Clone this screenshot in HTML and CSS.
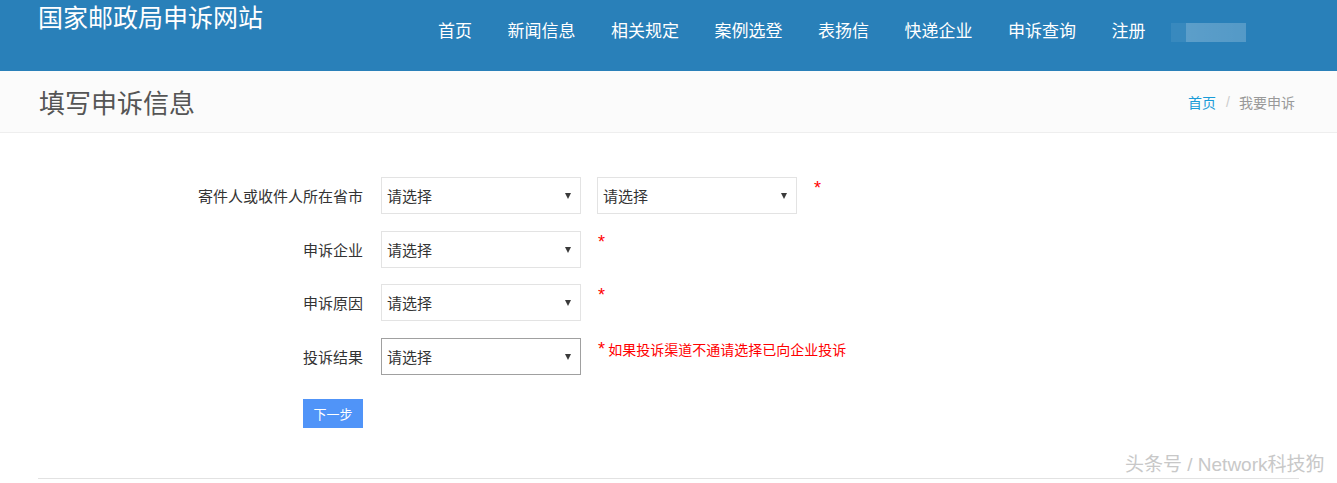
FILE: index.html
```html
<!DOCTYPE html>
<html lang="zh-CN">
<head>
<meta charset="utf-8">
<title>国家邮政局申诉网站</title>
<link rel="stylesheet" href="styles.css">
</head>
<body>
<header class="site-header">
  <h1 class="site-title">国家邮政局申诉网站</h1>
  <nav class="main-nav">
    <a href="#">首页</a>
    <a href="#">新闻信息</a>
    <a href="#">相关规定</a>
    <a href="#">案例选登</a>
    <a href="#">表扬信</a>
    <a href="#">快递企业</a>
    <a href="#">申诉查询</a>
    <a href="#">注册</a>
    <span class="blurred"></span>
  </nav>
</header>

<section class="page-band">
  <div class="band-inner">
    <h2 class="page-title">填写申诉信息</h2>
    <ol class="breadcrumb">
      <li><a href="#">首页</a></li>
      <li class="sep">/</li>
      <li class="current">我要申诉</li>
    </ol>
  </div>
</section>

<main class="content">
  <form class="complaint-form">
    <div class="form-row">
      <label class="form-label">寄件人或收件人所在省市</label>
      <div class="select-wrap"><select><option>请选择</option></select></div>
      <div class="select-wrap second"><select><option>请选择</option></select></div>
      <span class="req"><span class="star">*</span></span>
    </div>
    <div class="form-row">
      <label class="form-label">申诉企业</label>
      <div class="select-wrap"><select><option>请选择</option></select></div>
      <span class="req"><span class="star">*</span></span>
    </div>
    <div class="form-row">
      <label class="form-label">申诉原因</label>
      <div class="select-wrap"><select><option>请选择</option></select></div>
      <span class="req"><span class="star">*</span></span>
    </div>
    <div class="form-row">
      <label class="form-label">投诉结果</label>
      <div class="select-wrap focused"><select><option>请选择</option></select></div>
      <span class="req"><span class="star">*</span> 如果投诉渠道不通请选择已向企业投诉</span>
    </div>
    <div class="form-actions">
      <button type="button" class="btn-next">下一步</button>
    </div>
  </form>
  <hr class="footer-line">
</main>

<div class="watermark">头条号 / Network科技狗</div>
</body>
</html>
```

FILE: styles.css
```css
* { box-sizing: border-box; }

html, body {
  margin: 0;
  padding: 0;
}

body {
  font-family: "Liberation Sans", "Noto Sans CJK SC", sans-serif;
  color: #333;
  background: #fff;
  position: relative;
  height: 483px;
  overflow: hidden;
}

/* ---------- header ---------- */
.site-header {
  background: #2980b9;
  height: 71px;
  display: flex;
  align-items: flex-start;
  padding: 0 38px;
}

.site-title {
  margin: 0;
  padding-top: 3.5px;
  font-family: "Noto Sans CJK SC", sans-serif;
  font-weight: normal;
  font-size: 25px;
  line-height: 25px;
  color: #fff;
  white-space: nowrap;
}

.main-nav {
  display: flex;
  align-items: center;
  gap: 35.5px;
  margin-left: 175px;
  margin-top: 18px;
}

.main-nav a {
  font-family: "Noto Sans CJK SC", sans-serif;
  font-size: 17px;
  line-height: 20px;
  color: #fff;
  text-decoration: none;
  white-space: nowrap;
}

.main-nav .blurred {
  display: block;
  width: 75px;
  height: 19px;
  margin-left: -10.5px;
  margin-top: 5px;
  background: linear-gradient(to right,
    rgba(255,255,255,0.07) 0, rgba(255,255,255,0.07) 15px,
    rgba(255,255,255,0.24) 15px, rgba(255,255,255,0.20) 100%);
}

/* ---------- page band ---------- */
.page-band {
  background: #fbfbfb;
  border-bottom: 1px solid #eeeeee;
}

.band-inner {
  height: 61px;
  margin: 0 38px;
  display: flex;
  align-items: center;
  justify-content: space-between;
}

.page-title {
  margin: 0 0 0 1px;
  font-family: "Noto Sans CJK SC", sans-serif;
  font-weight: normal;
  font-size: 26px;
  line-height: 26px;
  color: #555;
}

.breadcrumb {
  list-style: none;
  margin: 0;
  padding: 0 4px 0 0;
  display: flex;
  align-items: center;
  font-family: "Noto Sans CJK SC", sans-serif;
  font-size: 14px;
  line-height: 20px;
}

.breadcrumb a {
  color: #1a9cd8;
  text-decoration: none;
}

.breadcrumb .sep {
  color: #cccccc;
  padding: 0 9px 0 10px;
  font-family: "Liberation Sans", sans-serif;
}

.breadcrumb .current {
  color: #999;
}

/* ---------- form ---------- */
.content {
  margin: 0 38px;
  padding-top: 44px;
}

.complaint-form {
  display: flex;
  flex-direction: column;
  gap: 16.5px;
}

.form-row {
  display: flex;
  align-items: flex-start;
}

.form-label {
  width: 325px;
  flex: none;
  margin-right: 18px;
  text-align: right;
  font-family: "Noto Sans CJK SC", sans-serif;
  font-size: 15px;
  line-height: 37px;
  color: #333;
  white-space: nowrap;
}

.select-wrap {
  position: relative;
  width: 200px;
  height: 37px;
  flex: none;
}

.select-wrap.second {
  margin-left: 16px;
}

.select-wrap select {
  appearance: none;
  -webkit-appearance: none;
  width: 100%;
  height: 100%;
  margin: 0;
  padding: 0 20px 0 5px;
  border: 1px solid #e3e3e3;
  border-radius: 0;
  background: #fff;
  font-family: "Noto Sans CJK SC", sans-serif;
  font-size: 15px;
  color: #333;
  outline: none;
}

.select-wrap.focused select {
  border-color: #a0a0a0;
}

.select-wrap::after {
  content: "";
  position: absolute;
  right: 10px;
  top: 16px;
  width: 0;
  height: 0;
  border-left: 3px solid transparent;
  border-right: 3px solid transparent;
  border-top: 6px solid #3a3a3a;
  pointer-events: none;
}

.req {
  margin-left: 17px;
  margin-top: 1px;
  font-family: "Noto Sans CJK SC", sans-serif;
  font-size: 14px;
  line-height: 20px;
  color: #f00;
  white-space: nowrap;
}

.req .star {
  font-family: "Liberation Sans", sans-serif;
  font-size: 18px;
  line-height: 20px;
  vertical-align: top;
  display: inline-block;
}

.form-actions {
  margin-top: 7.5px;
  width: 325px;
  display: flex;
  justify-content: flex-end;
}

.btn-next {
  width: 60px;
  height: 29px;
  border: none;
  border-radius: 0;
  background: #5094f8;
  color: #fff;
  font-family: "Noto Sans CJK SC", sans-serif;
  font-size: 13px;
  padding: 0;
  cursor: pointer;
}

.footer-line {
  margin: 50px 0 0;
  border: none;
  border-top: 1px solid #e2e2e2;
  height: 0;
}

/* ---------- watermark overlay ---------- */
.watermark {
  position: absolute;
  left: 1125px;
  top: 453px;
  font-family: "Liberation Sans", "Noto Sans CJK SC", sans-serif;
  font-size: 19px;
  line-height: 24px;
  color: #c8c8c8;
  text-shadow: 0 0 1px #fff, 1px 1px 0 #fff;
  white-space: nowrap;
}
```
